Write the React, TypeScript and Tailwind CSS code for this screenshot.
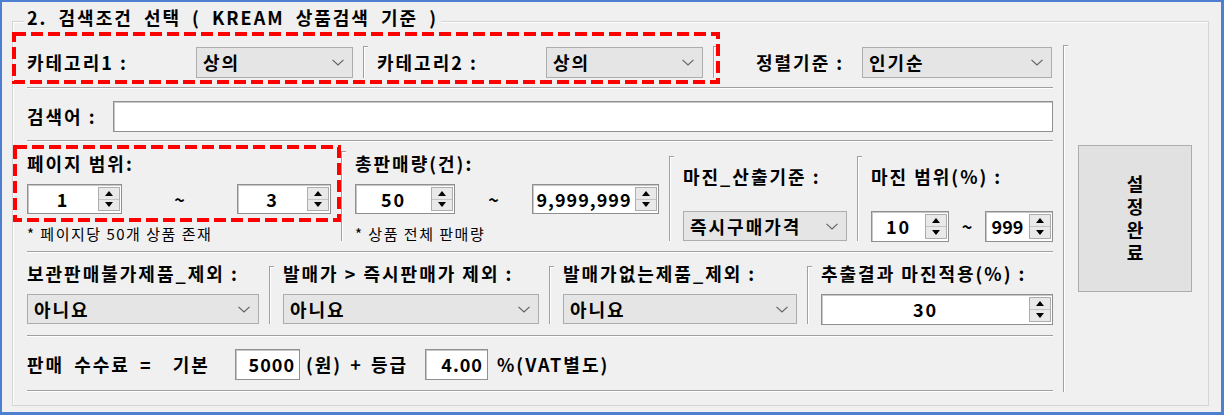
import React from "react";

const Chevron = () => (
  <svg width="12" height="7" viewBox="0 0 12 7" className="shrink-0">
    <polyline points="0.5,0.8 6,6 11.5,0.8" fill="none" stroke="#5f5f5f" strokeWidth="1.1" />
  </svg>
);

const Up = () => (
  <svg width="8" height="5" viewBox="0 0 8 5">
    <polygon points="4,0 8,5 0,5" fill="#000" />
  </svg>
);
const Down = () => (
  <svg width="8" height="5" viewBox="0 0 8 5">
    <polygon points="0,0 8,0 4,5" fill="#000" />
  </svg>
);

function Combo({ text, className }: { text: string; className: string }) {
  return (
    <div
      className={
        "flex items-center justify-between bg-[#e5e5e5] border border-[#adadad] pl-[6px] pr-[8px] " + className
      }
    >
      <span className="whitespace-nowrap">{text}</span>
      <Chevron />
    </div>
  );
}

function Spin({ value, className }: { value: string; className: string }) {
  return (
    <div className={"flex bg-white border border-[#8f8f8f] shadow-[inset_1px_1px_0_#c8c8c8] " + className}>
      <div className="flex-1 flex items-center justify-center whitespace-nowrap">{value}</div>
      <div className="w-[22px] my-[2px] mr-[1px] flex flex-col border border-[#adadad] bg-[#e9e9e9]">
        <div className="flex-1 flex items-center justify-center border-b border-[#c4c4c4]">
          <Up />
        </div>
        <div className="flex-1 flex items-center justify-center">
          <Down />
        </div>
      </div>
    </div>
  );
}

const HSep = () => <div className="h-[2px] border-t border-b border-t-[#a0a0a0] border-b-white" />;

function VSep({ className }: { className: string }) {
  return (
    <div
      className={
        "w-[5px] shrink-0 border-l border-t border-[#a0a0a0] shadow-[inset_1px_1px_0_#ffffff] " + className
      }
    />
  );
}

export default function App() {
  return (
    <div className="relative w-[1224px] h-[415px] font-['Noto_Sans_CJK_KR','Noto_Sans',sans-serif] font-bold text-[18px] text-black tracking-[2px]">
      <div className="w-[1224px] h-[415px] bg-[#f0f0f0] border-l-2 border-t-2 border-r-[3px] border-b-[3px] border-[#4f7fd1]">
        <div className="relative ml-[10px] mt-[19px] w-[1197px] h-[385px] border border-[#d5d5d5] shadow-[inset_1px_1px_0_#ffffff] flex">
          <div className="absolute left-[11px] -top-[16px] px-[3px] bg-[#f0f0f0] leading-[22px] whitespace-nowrap [word-spacing:5px]">
            2. 검색조건 선택 ( KREAM 상품검색 기준 )
          </div>

          {/* left column */}
          <div className="ml-[14px] w-[1026px] flex flex-col">
            {/* row 1 */}
            <div className="pt-[24px] pb-[9px] flex items-center">
              <div className="w-[169px] h-[31px] leading-[31px] whitespace-nowrap">카테고리1 :</div>
              <Combo text="상의" className="w-[157px] h-[31px]" />
              <VSep className="ml-[10px] h-[32px]" />
              <div className="ml-[9px] w-[169px] h-[31px] leading-[31px] whitespace-nowrap">카테고리2 :</div>
              <Combo text="상의" className="w-[157px] h-[31px]" />
              <VSep className="ml-[10px] h-[32px]" />
              <div className="ml-[38px] w-[106px] h-[31px] leading-[31px] whitespace-nowrap">정렬기준 :</div>
              <Combo text="인기순" className="w-[190px] h-[31px]" />
            </div>
            <HSep />

            {/* row 2 */}
            <div className="mt-[12px] mb-[8px] flex items-center h-[31px]">
              <div className="w-[86px] whitespace-nowrap">검색어 :</div>
              <div className="flex-1 h-[31px] bg-white border border-[#8f8f8f] shadow-[inset_1px_1px_0_#c8c8c8]" />
            </div>
            <HSep />

            {/* row 3 */}
            <div className="flex h-[109px]">
              <div className="w-[304px] pt-[10px] flex flex-col">
                <div className="h-[22px] leading-[22px] whitespace-nowrap">페이지 범위:</div>
                <div className="mt-[10px] flex h-[30px]">
                  <Spin value="1" className="w-[95px] h-[30px]" />
                  <div className="flex-1 text-center leading-[30px] tracking-normal">~</div>
                  <Spin value="3" className="w-[94px] h-[30px]" />
                </div>
                <div className="mt-[11px] text-[15px] leading-[18px] font-normal tracking-[1.5px] whitespace-nowrap">
                  * 페이지당 50개 상품 존재
                </div>
              </div>
              <VSep className="ml-[10px] mt-[9px] h-[90px]" />
              <div className="ml-[9px] w-[304px] pt-[10px] flex flex-col">
                <div className="h-[22px] leading-[22px] whitespace-nowrap">총판매량(건):</div>
                <div className="mt-[10px] flex h-[30px]">
                  <Spin value="50" className="w-[100px] h-[30px]" />
                  <div className="flex-1 text-center leading-[30px] tracking-normal">~</div>
                  <Spin value="9,999,999" className="w-[127px] h-[30px] tracking-[1px]" />
                </div>
                <div className="mt-[11px] text-[15px] leading-[18px] font-normal tracking-[1.5px] whitespace-nowrap">
                  * 상품 전체 판매량
                </div>
              </div>
              <VSep className="ml-[10px] mt-[14px] h-[85px]" />
              <div className="ml-[9px] w-[164px] pt-[23px] flex flex-col">
                <div className="h-[22px] leading-[22px] whitespace-nowrap">마진_산출기준 :</div>
                <Combo text="즉시구매가격" className="mt-[24px] w-[164px] h-[30px] pl-[3px]" />
              </div>
              <VSep className="ml-[10px] mt-[14px] h-[85px]" />
              <div className="ml-[9px] w-[182px] pt-[23px] flex flex-col">
                <div className="h-[22px] leading-[22px] whitespace-nowrap">마진 범위(%) :</div>
                <div className="mt-[24px] flex h-[31px]">
                  <Spin value="10" className="w-[78px] h-[31px]" />
                  <div className="flex-1 text-center leading-[31px] tracking-normal">~</div>
                  <Spin value="999" className="w-[68px] h-[31px] tracking-[0px]" />
                </div>
              </div>
            </div>
            <HSep />

            {/* row 4 */}
            <div className="flex pt-[9px] pb-[10px]">
              <div className="w-[232px] flex flex-col">
                <div className="h-[22px] leading-[22px] whitespace-nowrap">보관판매불가제품_제외 :</div>
                <Combo text="아니요" className="mt-[10px] w-[232px] h-[30px]" />
              </div>
              <VSep className="ml-[10px] mt-[4px] h-[58px]" />
              <div className="ml-[9px] w-[256px] flex flex-col">
                <div className="h-[22px] leading-[22px] whitespace-nowrap">발매가 &gt; 즉시판매가 제외 :</div>
                <Combo text="아니요" className="mt-[10px] w-[256px] h-[30px]" />
              </div>
              <VSep className="ml-[10px] mt-[4px] h-[58px]" />
              <div className="ml-[9px] w-[234px] flex flex-col">
                <div className="h-[22px] leading-[22px] whitespace-nowrap">발매가없는제품_제외 :</div>
                <Combo text="아니요" className="mt-[10px] w-[234px] h-[30px]" />
              </div>
              <VSep className="ml-[10px] mt-[4px] h-[58px]" />
              <div className="ml-[9px] w-[232px] flex flex-col">
                <div className="h-[22px] leading-[22px] whitespace-nowrap">추출결과 마진적용(%) :</div>
                <Spin value="30" className="mt-[10px] w-[232px] h-[31px]" />
              </div>
            </div>
            <HSep />

            {/* row 5 */}
            <div className="mt-[12px] mb-[10px] flex items-center h-[31px]">
              <div className="w-[208px] whitespace-nowrap [word-spacing:4px]">판매 수수료 = &nbsp;기본</div>
              <div className="w-[65px] h-[31px] bg-white border border-[#8f8f8f] shadow-[inset_1px_1px_0_#c8c8c8] flex items-center justify-end pr-[4px] tracking-[1px]">
                5000
              </div>
              <div className="ml-[6px] w-[119px] whitespace-nowrap [word-spacing:2px]">(원) + 등급</div>
              <div className="w-[63px] h-[31px] bg-white border border-[#8f8f8f] shadow-[inset_1px_1px_0_#c8c8c8] flex items-center justify-end pr-[4px] tracking-[1px]">
                4.00
              </div>
              <div className="ml-[9px] whitespace-nowrap">%(VAT별도)</div>
            </div>
            <HSep />
          </div>

          {/* right vertical line */}
          <div className="ml-[10px] mt-[23px] w-[5px] h-[347px] border-l border-t border-[#a0a0a0] shadow-[inset_1px_1px_0_#ffffff]" />

          {/* button */}
          <div className="ml-[10px] mt-[123px] w-[114px] h-[147px] bg-[#e1e1e1] border border-[#adadad] flex items-center justify-center">
            <span className="[writing-mode:vertical-rl] [text-orientation:upright] tracking-[5px] leading-[20px] pt-[5px]">
              설정완료
            </span>
          </div>
        </div>
      </div>

      {/* red dashed annotations */}
      <svg className="absolute left-0 top-0 pointer-events-none" width="1224" height="415">
        <rect x="14" y="34" width="704" height="48" fill="none" stroke="#ff0000" strokeWidth="4" strokeDasharray="12 5" />
        <rect x="15" y="147" width="324" height="73" fill="none" stroke="#ff0000" strokeWidth="4" strokeDasharray="12 5" />
      </svg>
    </div>
  );
}
